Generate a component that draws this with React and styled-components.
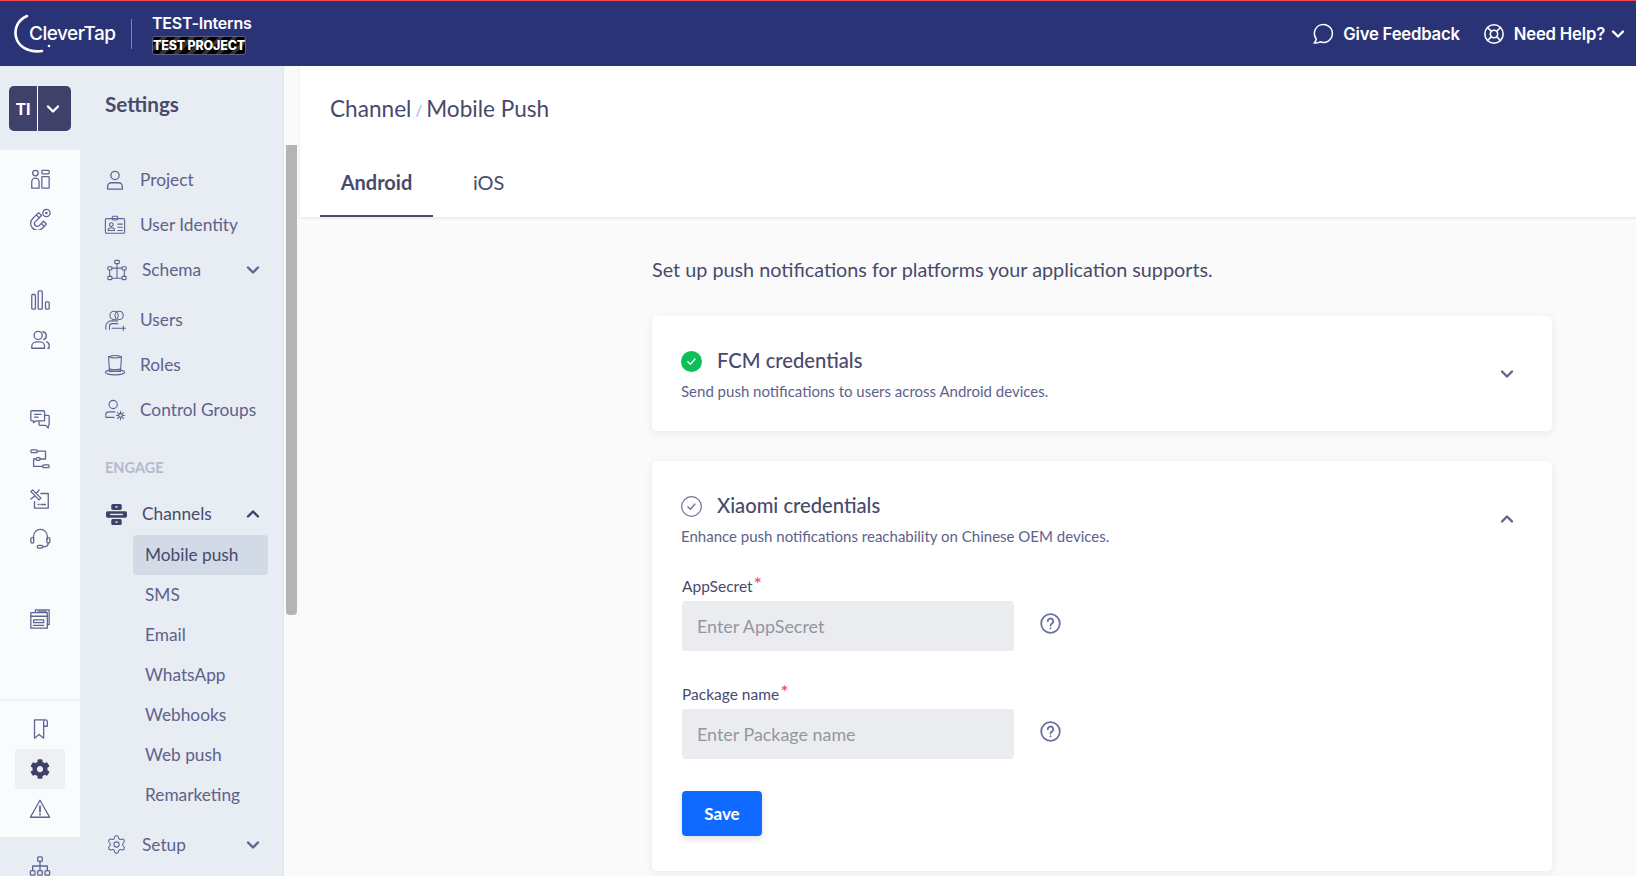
import React from 'react';
import styled, { createGlobalStyle } from 'styled-components';
import { FaCog } from 'react-icons/fa';
import { LifeBuoy, Settings } from 'lucide-react';

const GlobalStyle = createGlobalStyle`
  html, body {
    margin: 0;
    padding: 0;
    height: 100%;
    overflow: hidden;
    font-family: 'Lato', 'Liberation Sans', sans-serif;
    background: #fafafa;
  }
  * { box-sizing: border-box; }
`;

const Icon = ({ size = 24, children, color = '#5f6491', width = 1.4, fill = 'none' }) => (
  <svg
    width={size}
    height={size}
    viewBox="0 0 24 24"
    fill={fill}
    stroke={color}
    strokeWidth={width}
    strokeLinecap="round"
    strokeLinejoin="round"
  >
    {children}
  </svg>
);

const Chevron = ({ up, color = '#5f6491', size = 16, width = 2.4 }) => (
  <svg width={size} height={size} viewBox="0 0 16 16" fill="none" stroke={color} strokeWidth={width} strokeLinecap="round" strokeLinejoin="round">
    <path d={up ? 'M3 10.5 8 5.5l5 5' : 'M3 5.5 8 10.5l5-5'} />
  </svg>
);

const icons = {
  dashboard: (
    <>
      <circle cx="7" cy="5.5" r="3" />
      <path d="M3 22v-7a4 4 0 0 1 8 0v7z" />
      <rect x="14" y="2.5" width="8" height="4" rx="1" />
      <rect x="14" y="9.5" width="8" height="12.5" rx="0.5" />
    </>
  ),
  magnet: (
    <>
      <path d="M10.500 5 3.800 11.700a7.500 7.500 0 0 0 10.600 10.600L19 17.500l-3.200-3-4.700 4.700a3 3 0 0 1-4.200-4.300l6.700-6.700z" />
      <path d="M8 7.500l3.200 3.200M13.500 17l3 3" />
      <circle cx="19" cy="5.500" r="4" />
      <circle cx="19" cy="5.500" r="0.700" />
    </>
  ),
  bars: (
    <>
      <rect x="3" y="6" width="4" height="16" rx="1" />
      <rect x="10" y="2" width="4.500" height="20" rx="1" />
      <rect x="18" y="14" width="4" height="8" rx="1" />
    </>
  ),
  people: (
    <>
      <circle cx="10" cy="7" r="4.400" />
      <path d="M15 3a4.400 4.400 0 0 1 1 8.500" />
      <path d="M3 21v-2a5 5 0 0 1 5-5h4a5 5 0 0 1 5 5v2z" />
      <path d="M19 14a4 4 0 0 1 3 4v3h-1.500" />
    </>
  ),
  chat: (
    <>
      <path d="M3 3h13a1 1 0 0 1 1 1v9a1 1 0 0 1-1 1H8l-3 2v-2H3a1 1 0 0 1-1-1V4a1 1 0 0 1 1-1z" />
      <path d="M17 8h4a1 1 0 0 1 1 1v9a1 1 0 0 1-1 1v3l-3-3h-6a1 1 0 0 1-1-1v-3" />
      <path d="M6 7h7M6 10h4" />
    </>
  ),
  flow: (
    <>
      <rect x="2" y="2" width="7" height="3" rx="1" />
      <path d="M9 3.500h9v8.500H12M8 12H5v8h10" />
      <rect x="8" y="10.500" width="4" height="3" rx="1" />
      <rect x="15" y="18.500" width="7" height="3" rx="1" />
    </>
  ),
  journal: (
    <>
      <path d="M13 6h8v16H6v-7" />
      <path d="M13 18h5M10 18h1" />
      <path d="M2 4l2-2 9 9-2 2zM11 2 8 6M2 12l4-3" />
    </>
  ),
  headset: (
    <>
      <path d="M5 12V9a7.500 7.500 0 0 1 15 0v3" />
      <rect x="2" y="10.500" width="3.200" height="6" rx="1.600" />
      <rect x="19.500" y="10.500" width="3.200" height="6" rx="1.600" />
      <path d="M21 16.500c0 2.500-2 4-6 4" />
      <rect x="9" y="19" width="6" height="3" rx="1.500" />
    </>
  ),
  pages: (
    <>
      <path d="M7 4V2h15v16h-2" />
      <rect x="2" y="5" width="18" height="17" />
      <path d="M2 9h18M5 13h11v3H5zM5 19h11M10 3.500h9" />
    </>
  ),
  bookmark: (
    <>
      <path d="M17 2H6v20l5-4 5 4V4a2 2 0 0 1 4 0v5h-4" />
    </>
  ),
  warning: (
    <>
      <path d="M12 2.500 22.500 21h-21z" />
      <path d="M12 9v6M12 17.800v.4" strokeWidth="2" />
    </>
  ),
  org: (
    <>
      <rect x="9.500" y="2" width="5" height="5" rx="1" />
      <rect x="1.500" y="17" width="5" height="5" rx="1" />
      <rect x="9.500" y="17" width="5" height="5" rx="1" />
      <rect x="17.500" y="17" width="5" height="5" rx="1" />
      <path d="M12 7v10M4 17v-5h16v5" />
    </>
  ),
  user: (
    <>
      <circle cx="12" cy="7" r="4.500" />
      <path d="M4 22v-3a4 4 0 0 1 4-4h8a4 4 0 0 1 4 4v3z" />
    </>
  ),
  badge: (
    <>
      <rect x="1.500" y="5" width="21" height="16" rx="1.500" />
      <rect x="9" y="2.500" width="6" height="4" rx="1" />
      <circle cx="8" cy="11.500" r="2" />
      <path d="M4.500 18c0-4 7-4 7 0zM15 11h5M15 14.500h5M15 18h5" />
    </>
  ),
  schema: (
    <>
      <rect x="9.500" y="1.500" width="5" height="3.500" rx="1" />
      <rect x="2" y="8.500" width="4.500" height="3.500" rx="1" />
      <rect x="17.500" y="8.500" width="4.500" height="3.500" rx="1" />
      <rect x="2" y="19" width="4.500" height="3.500" rx="1" />
      <rect x="17.500" y="19" width="4.500" height="3.500" rx="1" />
      <path d="M6.500 10h11M12 5v5M4 12v7M20 12v7M12 10v11M6.500 21h11" />
    </>
  ),
  users: (
    <>
      <circle cx="11" cy="7" r="4.500" />
      <circle cx="16.500" cy="7" r="4.500" />
      <path d="M2 22v-3a6 6 0 0 1 6-6h7M6 22v-3a3 3 0 0 1 3-3h6M9 21h9M21 18.500v5M19 21h5" />
    </>
  ),
  hat: (
    <>
      <path d="M5 3c4-1.500 10-1.500 14 0l-1 16H6z" />
      <path d="M5 3c4 1.500 10 1.500 14 0" />
      <ellipse cx="12" cy="20" rx="10.500" ry="2.800" />
      <path d="M6 16c4 1.500 8 1.500 12 0" />
    </>
  ),
  group: (
    <>
      <circle cx="10" cy="6" r="4.500" />
      <path d="M2 20v-3a3 3 0 0 1 3-3h7M2 20h9" />
      <circle cx="18" cy="18" r="2" />
      <path d="M18 13.500v2M18 20.500v2M13.500 18h2M20.500 18h2M14.800 14.800l1.400 1.400M19.800 19.800l1.400 1.400M14.800 21.200l1.400-1.400M19.800 16.200l1.400-1.400" />
    </>
  ),
};

const Page = styled.div`
  width: 1636px;
  height: 876px;
  display: flex;
  flex-direction: column;
  overflow: hidden;
`;

const TopBar = styled.header`
  height: 66px;
  flex: none;
  background: #2a3376;
  border-top: 1px solid #f04a55;
  display: flex;
  align-items: center;
  justify-content: space-between;
  padding: 0 10px 0 14px;
  font-family: 'Inter', 'Liberation Sans', sans-serif;
  color: #fff;
`;

const Brand = styled.div`
  display: flex;
  align-items: center;
`;

const Logo = styled.div`
  display: flex;
  align-items: center;
  width: 117px;
  flex: none;
  font-size: 19px;
  font-weight: 500;
  letter-spacing: -0.5px;
`;

const LogoText = styled.span`
  margin-left: -25px;
`;

const Divider = styled.div`
  width: 1px;
  height: 30px;
  background: rgba(255, 255, 255, 0.4);
`;

const ProjectInfo = styled.div`
  margin-left: 20px;
  display: flex;
  flex-direction: column;
  gap: 3px;
`;

const ProjectName = styled.div`
  font-size: 16px;
  line-height: 20px;
  font-weight: 600;
  letter-spacing: -0.2px;
`;

const Stripe = styled.div`
  width: 94px;
  height: 19px;
  border: 1px solid #5b5f80;
  border-radius: 3px;
  background: repeating-linear-gradient(135deg, #000 0 6px, #333 6px 10px);
  font-size: 12.5px;
  font-weight: 800;
  line-height: 17px;
  text-align: center;
  white-space: nowrap;
  letter-spacing: -0.2px;
`;

const TopActions = styled.div`
  display: flex;
  align-items: center;
  gap: 23px;
`;

const TopAction = styled.div`
  display: flex;
  align-items: center;
  gap: 9px;
  font-size: 16.7px;
  font-weight: 600;
  letter-spacing: -0.2px;
`;

const TopChevron = styled.span`
  display: flex;
  margin-left: -4px;
`;

const Body = styled.div`
  flex: 1;
  display: flex;
  min-height: 0;
`;

const Rail = styled.nav`
  width: 80px;
  flex: none;
  display: flex;
  flex-direction: column;
  background: #fafbfc;
`;

const RailTop = styled.div`
  height: 84px;
  flex: none;
  background: #e8ecf3;
  padding: 20px 0 0 9px;
`;

const Switcher = styled.div`
  width: 62px;
  height: 45px;
  border-radius: 5px;
  background: #40416a;
  display: flex;
  color: #fff;
  font-family: 'Inter', 'Liberation Sans', sans-serif;
  font-weight: 700;
  font-size: 16px;
`;

const SwitcherPart = styled.div`
  display: flex;
  align-items: center;
  justify-content: center;
  width: ${p => p.$w}px;
  padding-right: ${p => (p.$line ? 4 : 0)}px;
  border-left: ${p => (p.$line ? '1px solid #fff' : 'none')};
`;

const RailGroups = styled.div`
  flex: 1;
  display: flex;
  flex-direction: column;
  padding-top: 9px;
`;

const RailGroup = styled.div`
  margin-top: ${p => p.$top || 0}px;
  display: flex;
  flex-direction: column;
`;

const RailIcon = styled.div`
  height: 40px;
  flex: none;
  display: flex;
  align-items: center;
  justify-content: center;
`;

const RailFooter = styled.div`
  height: 176px;
  flex: none;
  border-top: 1px solid #ecedf1;
  padding-top: 8px;
  display: flex;
  flex-direction: column;
  box-shadow: 0 -1px 2px rgba(40, 40, 80, 0.03);
`;

const ActiveRailIcon = styled(RailIcon)`
  margin: 0 15px;
  background: #eff0f4;
  border-radius: 3px;
`;

const RailBottom = styled.div`
  flex: 1;
  margin-top: 8px;
  background: #e8ecf3;
  display: flex;
  justify-content: center;
  padding-top: 18px;
`;

const Panel = styled.aside`
  width: 203px;
  flex: none;
  background: #e8ecf3;
  overflow: hidden;
`;

const PanelTitle = styled.div`
  height: 84px;
  padding: 25px 0 0 25px;
  font-size: 20.7px;
  line-height: 26px;
  font-weight: 700;
  color: #484a6c;
`;

const NavList = styled.div`
  padding: 7px 0 0 25px;
`;

const NavRow = styled.div`
  height: ${p => p.$h || 45}px;
  margin-top: ${p => p.$top || 0}px;
  display: flex;
  align-items: center;
  font-size: 17.3px;
  color: ${p => (p.$open ? '#484a6c' : '#5d628c')};
`;

const NavIcon = styled.span`
  width: ${p => (p.$wide ? 37 : 35)}px;
  flex: none;
  display: flex;
  margin-left: -1px;
  padding-left: ${p => (p.$wide ? 2 : 0)}px;
  margin-right: 1px;
`;

const NavLabel = styled.span`
  flex: 1;
  padding-bottom: 1px;
`;

const NavChevron = styled.span`
  display: flex;
  margin-right: 22px;
`;

const SectionLabel = styled.div`
  margin-top: 15px;
  height: 40px;
  display: flex;
  align-items: center;
  font-size: 14.5px;
  font-weight: 700;
  color: #b5b9cd;
`;

const SubList = styled.div`
  margin: -1px 15px 0 28px;
  display: flex;
  flex-direction: column;
`;

const SubItem = styled.div`
  height: 40px;
  display: flex;
  align-items: center;
  padding: 0 0 2px 12px;
  border-radius: 4px;
  font-size: 17.3px;
  background: ${p => (p.$active ? '#d1dae5' : 'transparent')};
  color: ${p => (p.$active ? '#484a6c' : '#5d628c')};
`;

const Track = styled.div`
  width: 17px;
  flex: none;
  background: #fafafa;
  border-left: 1px solid #e4e4e6;
  padding: 79px 3px 0 2px;
`;

const Thumb = styled.div`
  height: 470px;
  background: #b4b4b4;
  border-radius: 0 0 4px 4px;
`;

const Main = styled.main`
  flex: 1;
  min-width: 0;
  background: #fafafa;
  display: flex;
  flex-direction: column;
`;

const MainHead = styled.div`
  background: #fff;
  box-shadow: 0 1px 3px rgba(40, 40, 80, 0.1);
  flex: none;
  height: 151px;
  display: flex;
  flex-direction: column;
`;

const Crumbs = styled.div`
  height: 84px;
  padding: 29px 0 0 30px;
  font-size: 22.6px;
  line-height: 28px;
  color: #484a6c;
`;

const Slash = styled.span`
  color: #a9adbf;
  font-size: 15px;
  margin: 0 4px;
  position: relative;
  top: -1px;
`;

const Tabs = styled.div`
  display: flex;
  padding-left: 20px;
  flex: 1;
`;

const Tab = styled.div`
  padding: 0 20px 1px;
  min-width: ${p => (p.$active ? 113 : 0)}px;
  display: flex;
  align-items: center;
  justify-content: center;
  margin-right: ${p => (p.$active ? 20 : 0)}px;
  font-size: 20px;
  font-weight: ${p => (p.$active ? 700 : 400)};
  color: #484a6c;
  border-bottom: 2px solid ${p => (p.$active ? '#484a6c' : 'transparent')};
`;

const Content = styled.div`
  padding: 38px 0 0 352px;
  width: 1252px;
`;

const Intro = styled.div`
  font-size: 19.8px;
  line-height: 28px;
  color: #484a6c;
`;

const Card = styled.section`
  margin-top: ${p => p.$top}px;
  background: #fff;
  border-radius: 5px;
  box-shadow: 0 2px 8px rgba(40, 40, 80, 0.08);
  padding: 29px 30px 0 29px;
  height: ${p => p.$h}px;
`;

const CardHead = styled.div`
  display: flex;
  align-items: flex-start;
  justify-content: space-between;
`;

const CardTitleRow = styled.div`
  display: flex;
  align-items: center;
  gap: 15px;
  height: 30px;
`;

const StatusIcon = styled.span`
  display: flex;
  margin-top: 3px;
`;

const CardTitle = styled.div`
  font-size: 20.2px;
  font-weight: 500;
  color: #484a6c;
`;

const CardDesc = styled.div`
  margin-top: 6px;
  font-size: 15px;
  line-height: 20px;
  color: #5d628c;
`;

const CardChevron = styled.div`
  display: flex;
  margin: 21px 7px 0 0;
`;

const FieldLabel = styled.div`
  margin: ${p => p.$top}px 0 0 1px;
  font-size: 15.5px;
  line-height: 20px;
  color: #484a6c;
`;

const Req = styled.span`
  color: #f0434f;
  font-size: 20px;
  line-height: 0;
  vertical-align: 1px;
  margin-left: 1px;
`;

const FieldRow = styled.div`
  margin: 5px 0 0 1px;
  display: flex;
  align-items: center;
  gap: 26px;
`;

const Input = styled.input`
  width: 332px;
  height: 50px;
  border: none;
  outline: none;
  border-radius: 4px;
  background: #ebecf0;
  padding: 0 15px 1px;
  font-family: inherit;
  font-size: 17.9px;
  color: #484a6c;
  &::placeholder {
    color: #94969f;
    opacity: 1;
  }
`;

const HelpIcon = styled.span`
  display: flex;
  margin-top: -5px;
`;

const SaveButton = styled.button`
  display: block;
  margin: 32px 0 0 1px;
  width: 80px;
  height: 45px;
  border: none;
  border-radius: 4px;
  background: #0f6bff;
  box-shadow: 0 3px 6px rgba(40, 40, 80, 0.15);
  color: #fff;
  font-family: inherit;
  font-size: 17px;
  font-weight: 700;
`;

const CheckMark = ({ done }) => (
  <svg width="21" height="21" viewBox="0 0 21 21">
    <circle cx="10.500" cy="10.500" r={done ? 10.500 : 9.800} fill={done ? '#0dbf57' : 'none'} stroke={done ? 'none' : '#6d7199'} strokeWidth="1.200" />
    <path d="M6.800 10.800 9.400 13.300 14 8" fill="none" stroke={done ? '#fff' : '#6d7199'} strokeWidth="1.300" strokeLinecap="round" strokeLinejoin="round" />
  </svg>
);

const Help = () => (
  <svg width="21" height="21" viewBox="0 0 21 21" fill="none" stroke="#6b70a0" strokeWidth="1.800" strokeLinecap="round">
    <circle cx="10.500" cy="10.500" r="9.300" />
    <path d="M7.800 8.200a2.700 2.700 0 1 1 4 2.400c-.9.500-1.300 1-1.300 2" />
    <path d="M10.500 15.200v.2" />
  </svg>
);

const railGroups = [
  { top: 0, items: ['dashboard', 'magnet'] },
  { top: 41, items: ['bars', 'people'] },
  { top: 39, items: ['chat', 'flow', 'journal', 'headset'] },
  { top: 40, items: ['pages'] },
];

const subItems = ['Mobile push', 'SMS', 'Email', 'WhatsApp', 'Webhooks', 'Web push', 'Remarketing'];

const App = () => (
  <>
    <GlobalStyle />
    <Page>
      <TopBar>
        <Brand>
          <Logo>
            <svg width="40" height="44" viewBox="0 0 40 44" fill="none" stroke="#fff" strokeWidth="2.600" strokeLinecap="round">
              <path d="M13 4C4 8 0 16 2 25c2 9 12 16 26 14" />
              <circle cx="35" cy="34" r="1.300" fill="#fff" stroke="none" />
            </svg>
            <LogoText>CleverTap</LogoText>
          </Logo>
          <Divider />
          <ProjectInfo>
            <ProjectName>TEST-Interns</ProjectName>
            <Stripe>TEST PROJECT</Stripe>
          </ProjectInfo>
        </Brand>
        <TopActions>
          <TopAction>
            <svg width="21" height="21" viewBox="0 0 21 21" fill="none" stroke="#fff" strokeWidth="1.500" strokeLinejoin="round">
              <path d="M1 20c1.500-1 2-2.500 2.300-4A9 9 0 1 1 7 18.800 9 9 0 0 1 1 20z" />
            </svg>
            Give Feedback
          </TopAction>
          <TopAction>
            <LifeBuoy size={22} strokeWidth={1.700} />
            Need Help?
            <TopChevron><Chevron color="#fff" /></TopChevron>
          </TopAction>
        </TopActions>
      </TopBar>
      <Body>
        <Rail>
          <RailTop>
            <Switcher>
              <SwitcherPart $w={28}>TI</SwitcherPart>
              <SwitcherPart $w={34} $line>
                <Chevron color="#fff" />
              </SwitcherPart>
            </Switcher>
          </RailTop>
          <RailGroups>
            {railGroups.map(group => (
              <RailGroup key={group.items[0]} $top={group.top}>
                {group.items.map(name => (
                  <RailIcon key={name}>
                    <Icon size={22}>{icons[name]}</Icon>
                  </RailIcon>
                ))}
              </RailGroup>
            ))}
          </RailGroups>
          <RailFooter>
            <RailIcon>
              <Icon size={22}>{icons.bookmark}</Icon>
            </RailIcon>
            <ActiveRailIcon>
              <FaCog size={20} color="#3f416a" />
            </ActiveRailIcon>
            <RailIcon>
              <Icon size={22}>{icons.warning}</Icon>
            </RailIcon>
            <RailBottom>
              <Icon size={22}>{icons.org}</Icon>
            </RailBottom>
          </RailFooter>
        </Rail>
        <Panel>
          <PanelTitle>Settings</PanelTitle>
          <NavList>
            <NavRow>
              <NavIcon><Icon size={22}>{icons.user}</Icon></NavIcon>
              <NavLabel>Project</NavLabel>
            </NavRow>
            <NavRow>
              <NavIcon><Icon size={22} width={1.2}>{icons.badge}</Icon></NavIcon>
              <NavLabel>User Identity</NavLabel>
            </NavRow>
            <NavRow>
              <NavIcon $wide><Icon size={22} width={1.2}>{icons.schema}</Icon></NavIcon>
              <NavLabel>Schema</NavLabel>
              <NavChevron><Chevron /></NavChevron>
            </NavRow>
            <NavRow $top={5}>
              <NavIcon><Icon size={22} width={1.2}>{icons.users}</Icon></NavIcon>
              <NavLabel>Users</NavLabel>
            </NavRow>
            <NavRow>
              <NavIcon><Icon size={22} width={1.2}>{icons.hat}</Icon></NavIcon>
              <NavLabel>Roles</NavLabel>
            </NavRow>
            <NavRow>
              <NavIcon><Icon size={22} width={1.2}>{icons.group}</Icon></NavIcon>
              <NavLabel>Control Groups</NavLabel>
            </NavRow>
            <SectionLabel>ENGAGE</SectionLabel>
            <NavRow $h={44} $top={5} $open>
              <NavIcon $wide>
                <svg width="21" height="21" viewBox="0 0 20 20">
                  <rect x="5" y="0" width="10" height="5.600" rx="1.500" fill="#40416a" />
                  <rect x="9" y="2" width="2" height="1.400" fill="#e8ecf3" />
                  <rect x="0" y="7" width="20" height="6" rx="1.500" fill="#40416a" />
                  <rect x="4" y="9.300" width="12" height="1.300" fill="#e8ecf3" />
                  <rect x="5" y="14.400" width="10" height="5.600" rx="1.500" fill="#40416a" />
                  <rect x="9" y="16.600" width="2" height="1.400" fill="#e8ecf3" />
                </svg>
              </NavIcon>
              <NavLabel>Channels</NavLabel>
              <NavChevron><Chevron up color="#40416a" /></NavChevron>
            </NavRow>
            <SubList>
              {subItems.map((item, i) => (
                <SubItem key={item} $active={i === 0}>{item}</SubItem>
              ))}
            </SubList>
            <NavRow $top={7}>
              <NavIcon $wide><Settings size={21} strokeWidth={1.200} color="#5f6491" /></NavIcon>
              <NavLabel>Setup</NavLabel>
              <NavChevron><Chevron /></NavChevron>
            </NavRow>
          </NavList>
        </Panel>
        <Track>
          <Thumb />
        </Track>
        <Main>
          <MainHead>
            <Crumbs>
              Channel<Slash>/</Slash>Mobile Push
            </Crumbs>
            <Tabs>
              <Tab $active>Android</Tab>
              <Tab>iOS</Tab>
            </Tabs>
          </MainHead>
          <Content>
            <Intro>Set up push notifications for platforms your application supports.</Intro>
            <Card $top={33} $h={115}>
              <CardHead>
                <div>
                  <CardTitleRow>
                    <StatusIcon><CheckMark done /></StatusIcon>
                    <CardTitle>FCM credentials</CardTitle>
                  </CardTitleRow>
                  <CardDesc>Send push notifications to users across Android devices.</CardDesc>
                </div>
                <CardChevron><Chevron /></CardChevron>
              </CardHead>
            </Card>
            <Card $top={30} $h={410}>
              <CardHead>
                <div>
                  <CardTitleRow>
                    <StatusIcon><CheckMark /></StatusIcon>
                    <CardTitle>Xiaomi credentials</CardTitle>
                  </CardTitleRow>
                  <CardDesc>Enhance push notifications reachability on Chinese OEM devices.</CardDesc>
                </div>
                <CardChevron><Chevron up /></CardChevron>
              </CardHead>
              <FieldLabel $top={30}>AppSecret<Req>*</Req></FieldLabel>
              <FieldRow>
                <Input placeholder="Enter AppSecret" />
                <HelpIcon><Help /></HelpIcon>
              </FieldRow>
              <FieldLabel $top={33}>Package name<Req>*</Req></FieldLabel>
              <FieldRow>
                <Input placeholder="Enter Package name" />
                <HelpIcon><Help /></HelpIcon>
              </FieldRow>
              <SaveButton>Save</SaveButton>
            </Card>
          </Content>
        </Main>
      </Body>
    </Page>
  </>
);

export default App;
